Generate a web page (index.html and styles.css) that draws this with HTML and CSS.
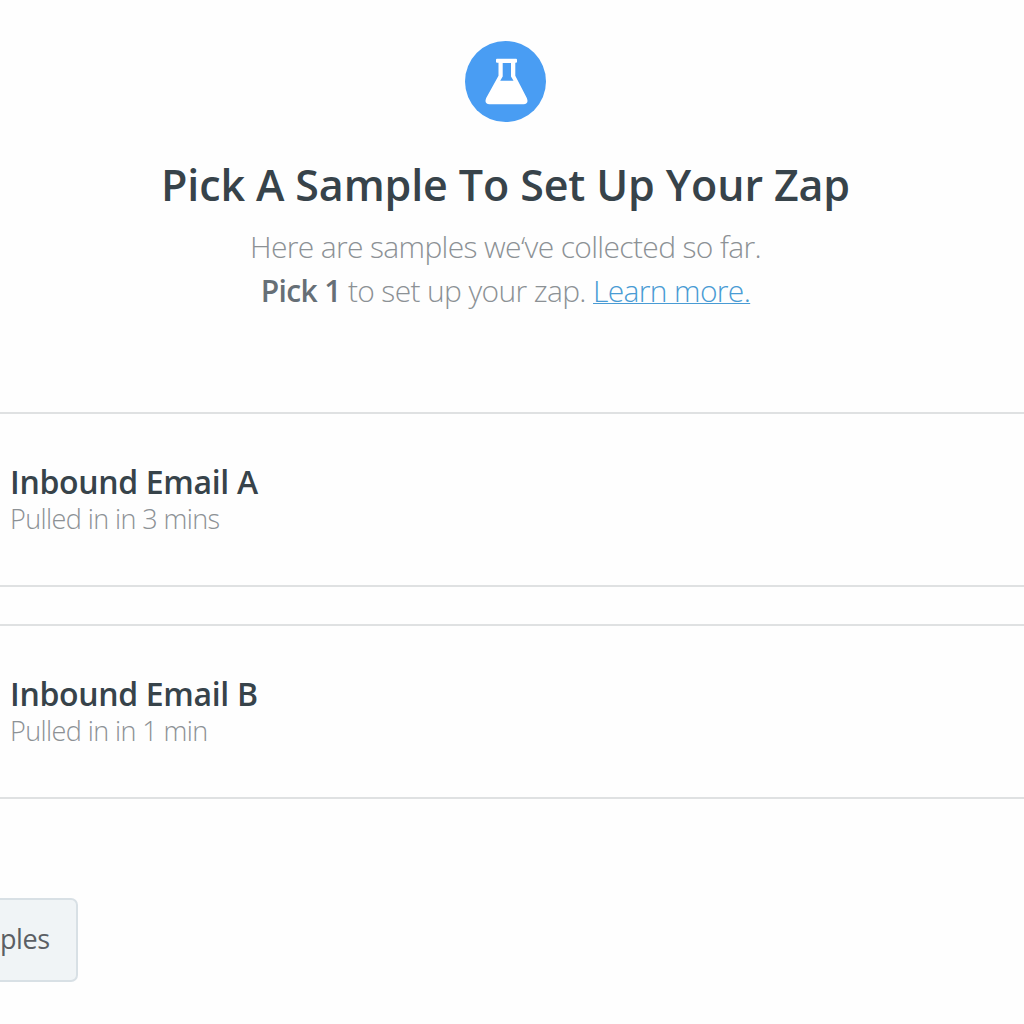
FILE: index.html
```html
<!DOCTYPE html>
<html lang="en">
<head>
  <meta charset="UTF-8" />
  <meta name="viewport" content="width=device-width, initial-scale=1.0"/>
  <title>Pick A Sample To Set Up Your Zap</title>
  <link rel="stylesheet" href="styles.css">
</head>
<body>

  <!-- Header -->
  <header class="intro">
    <svg class="intro-icon" viewBox="0 0 81 81">
      <circle cx="40.5" cy="40.5" r="40.5" fill="#499df3"/>
      <path d="M32 17.8h19q1 0 1 1v2q0 1-1 1h-.7v13L61.8 57q2.4 6-3.3 6.2h-34Q18.800 63 21.200 57L33.500 34.800v-13H32q-1 0-1-1v-2q0-1 1-1z" fill="#fff"/>
      <path d="M37.700 22h8.300v13.500l2.500 4.200H35.200l2.500-4.200z" fill="#499df3"/>
    </svg>
    <h1>Pick A Sample To Set Up Your Zap</h1>
    <p>Here are samples we‘ve collected so far.<br><strong>Pick 1</strong> to set up your zap. <a href="#">Learn more.</a></p>
  </header>

  <!-- Samples -->
  <main class="samples">
    <div class="sample">
      <h2>Inbound Email A</h2>
      <p>Pulled in in 3 mins</p>
    </div>
    <div class="sample">
      <h2>Inbound Email B</h2>
      <p>Pulled in in 1 min</p>
    </div>
  </main>

  <button class="more-button">ples</button>

</body>
</html>
```

FILE: styles.css
```css
* {
  box-sizing: border-box;
}

body {
  margin: 0;
  height: 1024px;
  overflow: hidden;
  font-family: "Open Sans", sans-serif;
  background: #fefefe;
  color: #37434a;
}

h1, h2, p {
  margin: 0;
}

/* Header */
.intro {
  display: flex;
  flex-direction: column;
  align-items: center;
  width: 1011px;
  height: 412px;
  padding-top: 41px;
  text-align: center;
}

.intro-icon {
  width: 81px;
  height: 81px;
}

.intro h1 {
  margin-top: 33px;
  font-size: 43px;
  line-height: 60px;
  font-weight: 600;
  letter-spacing: -0.12px;
  white-space: nowrap;
}

.intro p {
  margin-top: 10px;
  font-size: 30px;
  line-height: 44px;
  font-weight: 300;
  letter-spacing: -0.65px;
  color: #8c9195;
  white-space: nowrap;
}

.intro strong {
  font-weight: 600;
  color: #666f76;
}

.intro a {
  color: #499bd4;
  text-decoration-thickness: 1px;
}

/* Samples */
.samples {
  display: flex;
  flex-direction: column;
  gap: 37px;
}

.sample {
  height: 175px;
  padding: 48px 10px 0;
  border-top: 2px solid #dfe1e2;
  border-bottom: 2px solid #dfe1e2;
}

.sample h2 {
  font-size: 32px;
  line-height: 40px;
  font-weight: 600;
  letter-spacing: -0.33px;
}

.sample p {
  font-size: 27px;
  line-height: 34px;
  font-weight: 300;
  letter-spacing: -0.6px;
  color: #8c9195;
}

.more-button {
  display: block;
  width: 78px;
  height: 84px;
  margin-top: 99px;
  padding: 0 29px 3px 0;
  border: 2px solid #d8e0e5;
  border-left: 0;
  border-radius: 0 7px 7px 0;
  background: #f0f4f6;
  font-family: inherit;
  font-size: 27px;
  letter-spacing: -0.4px;
  text-align: right;
  color: #5b5f64;
}
```
